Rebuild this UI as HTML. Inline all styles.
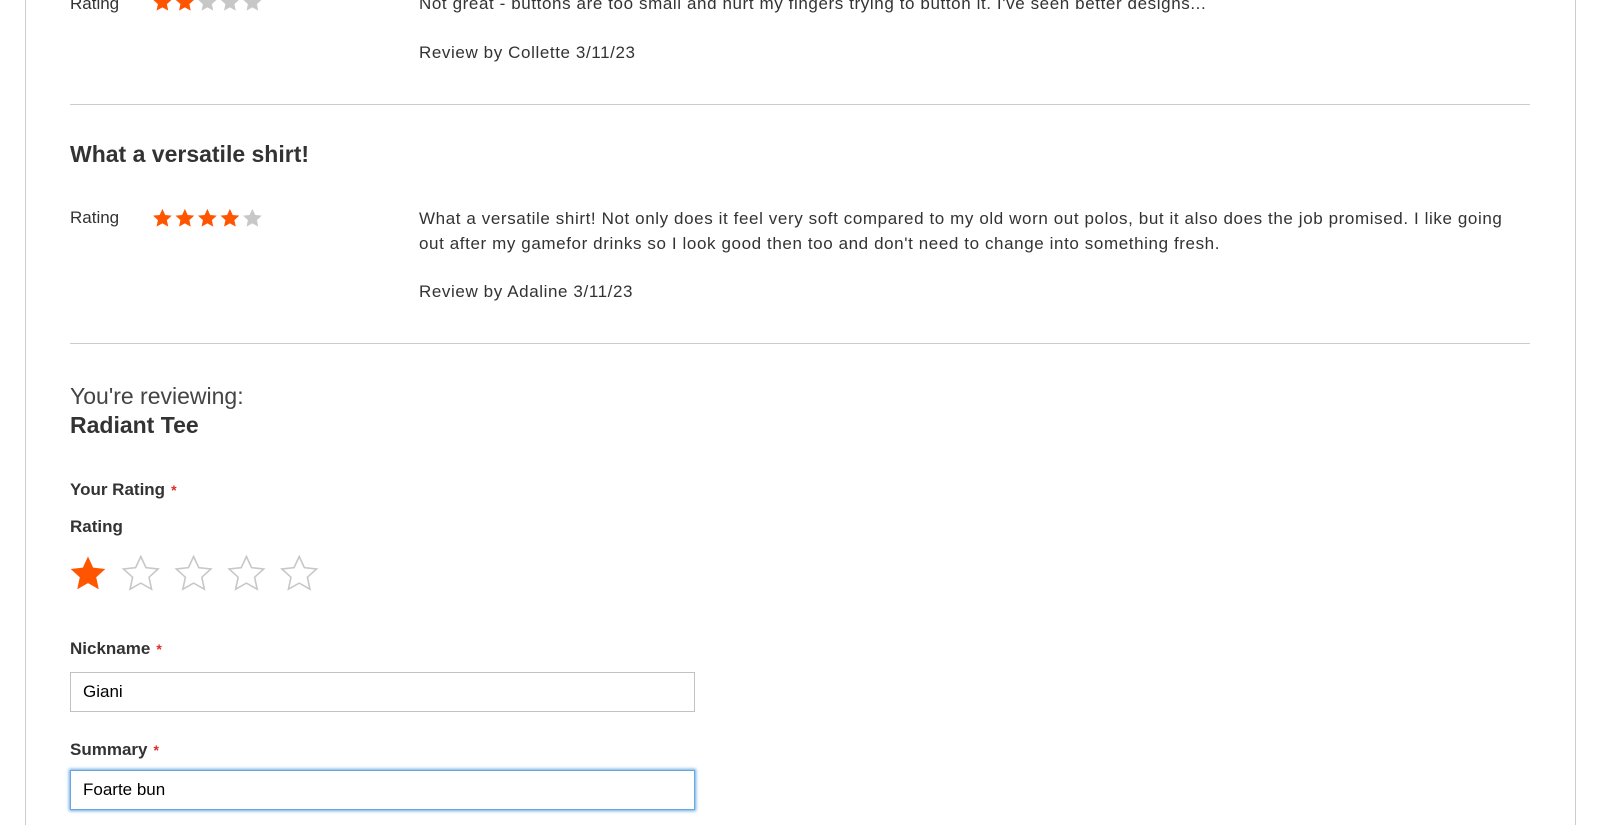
<!DOCTYPE html>
<html><head><meta charset="utf-8"><style>
*{box-sizing:border-box;margin:0;padding:0}
body{width:1600px;height:810px;overflow:hidden;background:#fff;font-family:"Liberation Sans",Arial,sans-serif;color:#333;position:relative}
.frame{position:absolute;left:25px;top:-5px;width:1551px;height:830px;border-left:1.5px solid #ccc;border-right:1.5px solid #ccc}
.a{position:absolute;white-space:nowrap}
.hr{position:absolute;left:70px;width:1460px;height:1px;background:#ccc}
.t{font-size:17px}
.rv{letter-spacing:0.6px}
.req{color:#e02b27;font-size:14px;margin-left:6px}
.lbl{font-size:17px;font-weight:bold;color:#333}
.inp{position:absolute;left:70px;width:625px;height:40px;border:1px solid #c2c2c2;font-size:17px;padding:9px 12px;color:#000}
svg{position:absolute;overflow:visible}
</style></head><body>
<svg width="0" height="0" style="position:absolute"><defs><path id="s" d="M12 2l2.94 6.36 6.96.78-5.2 4.7 1.46 6.86L12 17.2l-6.16 3.5 1.46-6.86-5.2-4.7 6.96-.78z"/></defs></svg>
<div class="frame"></div>
<div class="a t" style="left:70px;top:-6px">Rating</div>
<svg style="left:151px;top:-9px" width="120" height="24" viewBox="0 0 120 24">
<use href="#s" fill="#ff5501" transform="translate(0,0) scale(0.95)"/><use href="#s" fill="#ff5501" transform="translate(22.5,0) scale(0.95)"/><use href="#s" fill="#c7c7c7" transform="translate(45,0) scale(0.95)"/><use href="#s" fill="#c7c7c7" transform="translate(67.5,0) scale(0.95)"/><use href="#s" fill="#c7c7c7" transform="translate(90,0) scale(0.95)"/></svg>
<div class="a t rv" style="left:419px;top:-6px">Not great - buttons are too small and hurt my fingers trying to button it. I've seen better designs...</div>
<div class="a t rv" style="left:419px;top:43px">Review by Collette 3/11/23</div>
<div class="hr" style="top:104px"></div>
<div class="a" style="left:70px;top:141px;font-size:23px;font-weight:bold;color:#333">What a versatile shirt!</div>
<div class="a t" style="left:70px;top:208px">Rating</div>
<svg style="left:151px;top:207px" width="120" height="24" viewBox="0 0 120 24">
<use href="#s" fill="#ff5501" transform="translate(0,0) scale(0.95)"/><use href="#s" fill="#ff5501" transform="translate(22.5,0) scale(0.95)"/><use href="#s" fill="#ff5501" transform="translate(45,0) scale(0.95)"/><use href="#s" fill="#ff5501" transform="translate(67.5,0) scale(0.95)"/><use href="#s" fill="#c7c7c7" transform="translate(90,0) scale(0.95)"/></svg>
<div class="a t rv" style="left:419px;top:206px;line-height:25px">What a versatile shirt! Not only does it feel very soft compared to my old worn out polos, but it also does the job promised. I like going<br>out after my gamefor drinks so I look good then too and don't need to change into something fresh.</div>
<div class="a t rv" style="left:419px;top:282px">Review by Adaline 3/11/23</div>
<div class="hr" style="top:343px"></div>
<div class="a" style="left:70px;top:383px;font-size:23px;color:#444">You're reviewing:</div>
<div class="a" style="left:70px;top:412px;font-size:23px;font-weight:bold">Radiant Tee</div>
<div class="a lbl" style="left:70px;top:480px">Your Rating<span class="req">*</span></div>
<div class="a lbl" style="left:70px;top:517px">Rating</div>
<svg style="left:69px;top:555px" width="270" height="44" viewBox="0 0 270 44">
<use href="#s" fill="#ff5501" transform="translate(-2,-2) scale(1.75)"/>
<use href="#s" fill="none" stroke="#c7c7c7" stroke-width="0.9" transform="translate(50.8,-2) scale(1.75)"/>
<use href="#s" fill="none" stroke="#c7c7c7" stroke-width="0.9" transform="translate(103.6,-2) scale(1.75)"/>
<use href="#s" fill="none" stroke="#c7c7c7" stroke-width="0.9" transform="translate(156.4,-2) scale(1.75)"/>
<use href="#s" fill="none" stroke="#c7c7c7" stroke-width="0.9" transform="translate(209.2,-2) scale(1.75)"/>
</svg>
<div class="a lbl" style="left:70px;top:639px">Nickname<span class="req">*</span></div>
<div class="inp" style="top:672px">Giani</div>
<div class="a lbl" style="left:70px;top:740px">Summary<span class="req">*</span></div>
<div class="inp" style="top:770px;border-color:#68a8e0;box-shadow:0 0 3px 1px #68a8e0">Foarte bun</div>
</body></html>
